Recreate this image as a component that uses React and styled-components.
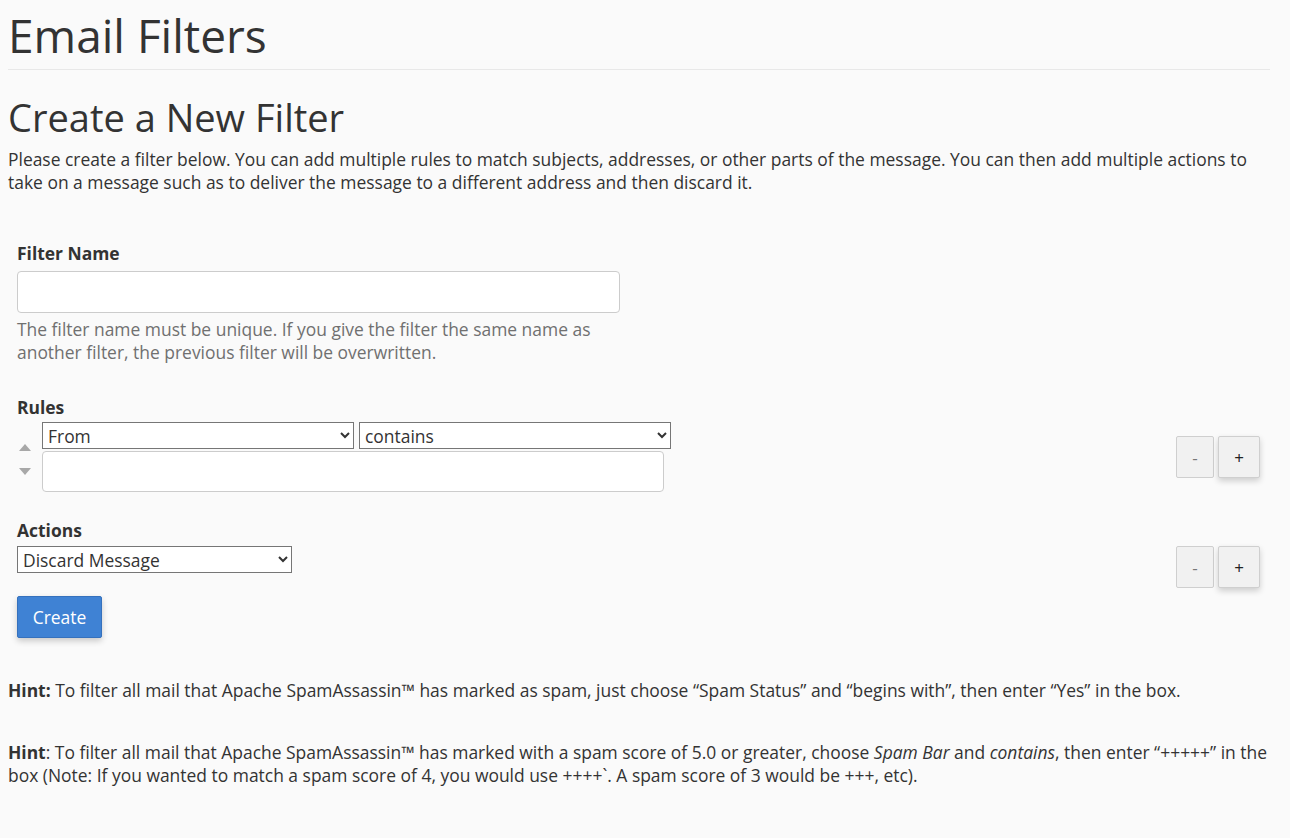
import React from "react";
import styled, { createGlobalStyle } from "styled-components";

const Global = createGlobalStyle`
  html, body { margin: 0; padding: 0; background: #fafafa; }
  body { font-family: "Open Sans", "Liberation Sans", sans-serif; color: #333; font-size: 17.44px; line-height: 23px; }
  * { box-sizing: border-box; }
`;

const Page = styled.div`
  padding: 0 14px 40px 8px;
`;

const Title = styled.h1`
  margin: 0;
  padding-top: 5px;
  font-size: 46px;
  font-weight: 400;
  line-height: 60px;
  color: #333;
`;

const Rule = styled.hr`
  border: 0;
  border-top: 1px solid #e8e8e8;
  margin: 4px 6px 20px 0;
`;

const Subtitle = styled.h2`
  margin: 0;
  font-size: 38px;
  font-weight: 400;
  line-height: 54px;
  color: #333;
`;

const Intro = styled.p`
  margin: 4px 0 0;
  font-size: 17.44px;
  line-height: 23px;
`;

const Form = styled.form`
  padding: 48px 0 0 9px;
`;

const Group = styled.div`
  margin-bottom: ${(p) => p.$mb || 0}px;
`;

const Label = styled.div`
  font-weight: 700;
  font-size: 17.44px;
  line-height: 23px;
  margin-bottom: ${(p) => p.$mb || 7}px;
`;

const TextInput = styled.input`
  display: block;
  width: ${(p) => p.$w}px;
  height: ${(p) => p.$h}px;
  border: 1px solid #cccccc;
  border-radius: 4px;
  background: #fff;
  font: inherit;
  padding: 6px 12px;
`;

const Help = styled.div`
  color: #707070;
  font-size: 17.44px;
  line-height: 23px;
  width: 603px;
  margin-top: 5px;
`;

const Row = styled.div`
  display: flex;
  align-items: ${(p) => p.$align || "center"};
  justify-content: space-between;
`;

const RuleLeft = styled.div`
  display: flex;
  align-items: center;
  gap: 9px;
`;

const Arrows = styled.div`
  display: flex;
  flex-direction: column;
  gap: 17px;
  width: 16px;
  align-items: center;
  padding-top: 4px;
`;

const Tri = styled.span`
  width: 0;
  height: 0;
  border-left: 6px solid transparent;
  border-right: 6px solid transparent;
  ${(p) => (p.$up ? "border-bottom: 7px solid #a8a8a8;" : "border-top: 7px solid #a8a8a8;")}
`;

const Fields = styled.div`
  display: flex;
  flex-direction: column;
  gap: 2px;
`;

const Selects = styled.div`
  display: flex;
  gap: 5px;
`;

const Select = styled.select`
  width: ${(p) => p.$w}px;
  height: 27px;
  border: 1px solid #767676;
  border-radius: 0;
  background: #fff;
  color: #333;
  font-family: "Open Sans", "Liberation Sans", sans-serif;
  font-size: 17.44px;
  padding: 0 2px 0 1px;
`;

const StepGroup = styled.div`
  display: flex;
  gap: 4px;
  margin-right: 16px;
`;

const Step = styled.button`
  width: ${(p) => (p.$primary ? 42 : 38)}px;
  height: 42px;
  border: 1px solid #cfcfcf;
  border-radius: 2px;
  background: #f1f1f1;
  color: ${(p) => (p.$primary ? "#222" : "#777")};
  font-family: "Open Sans", "Liberation Sans", sans-serif;
  font-size: 17px;
  padding: 0;
  box-shadow: ${(p) => (p.$primary ? "0 3px 6px rgba(0,0,0,0.18)" : "none")};
`;

const CreateButton = styled.button`
  margin-top: 8px;
  width: 85px;
  height: 42px;
  background: #3f82d4;
  border: 1px solid #3571bd;
  border-radius: 2px;
  color: #fff;
  font-family: "Open Sans", "Liberation Sans", sans-serif;
  font-size: 17.44px;
  box-shadow: 0 3px 6px rgba(0,0,0,0.2);
`;

const Hint = styled.p`
  margin: ${(p) => p.$mt}px 0 0;
  font-size: 17.44px;
  line-height: 23px;
`;

export default function App() {
  return (
    <>
      <Global />
      <Page>
        <Title>Email Filters</Title>
        <Rule />
        <Subtitle>Create a New Filter</Subtitle>
        <Intro>
          Please create a filter below. You can add multiple rules to match subjects, addresses, or other parts of the
          message. You can then add multiple actions to take on a message such as to deliver the message to a different
          address and then discard it.
        </Intro>
        <Form onSubmit={(e) => e.preventDefault()}>
          <Group $mb={32}>
            <Label $mb={6}>Filter Name</Label>
            <TextInput $w={603} $h={42} />
            <Help>
              The filter name must be unique. If you give the filter the same name as another filter, the previous
              filter will be overwritten.
            </Help>
          </Group>
          <Group $mb={27}>
            <Label $mb={3}>Rules</Label>
            <Row>
              <RuleLeft>
                <Arrows>
                  <Tri $up />
                  <Tri />
                </Arrows>
                <Fields>
                  <Selects>
                    <Select $w={312} defaultValue="From">
                      <option>From</option>
                      <option>Subject</option>
                      <option>To</option>
                    </Select>
                    <Select $w={312} defaultValue="contains">
                      <option>contains</option>
                      <option>begins with</option>
                    </Select>
                  </Selects>
                  <TextInput $w={622} $h={41} />
                </Fields>
              </RuleLeft>
              <StepGroup>
                <Step type="button">-</Step>
                <Step type="button" $primary>+</Step>
              </StepGroup>
            </Row>
          </Group>
          <Group>
            <Label $mb={4}>Actions</Label>
            <Row $align="flex-start">
              <Select $w={275} defaultValue="Discard Message">
                <option>Discard Message</option>
                <option>Redirect to Email</option>
              </Select>
              <StepGroup>
                <Step type="button">-</Step>
                <Step type="button" $primary>+</Step>
              </StepGroup>
            </Row>
          </Group>
          <CreateButton type="submit">Create</CreateButton>
        </Form>
        <Hint $mt={41}>
          <b>Hint:</b> To filter all mail that Apache SpamAssassin™ has marked as spam, just choose “Spam Status” and
          “begins with”, then enter “Yes” in the box.
        </Hint>
        <Hint $mt={39}>
          <b>Hint</b>: To filter all mail that Apache SpamAssassin™ has marked with a spam score of 5.0 or greater,
          choose <i>Spam Bar</i> and <i>contains</i>, then enter “+++++” in the box (Note: If you wanted to match a spam
          score of 4, you would use ++++`. A spam score of 3 would be +++, etc).
        </Hint>
      </Page>
    </>
  );
}
